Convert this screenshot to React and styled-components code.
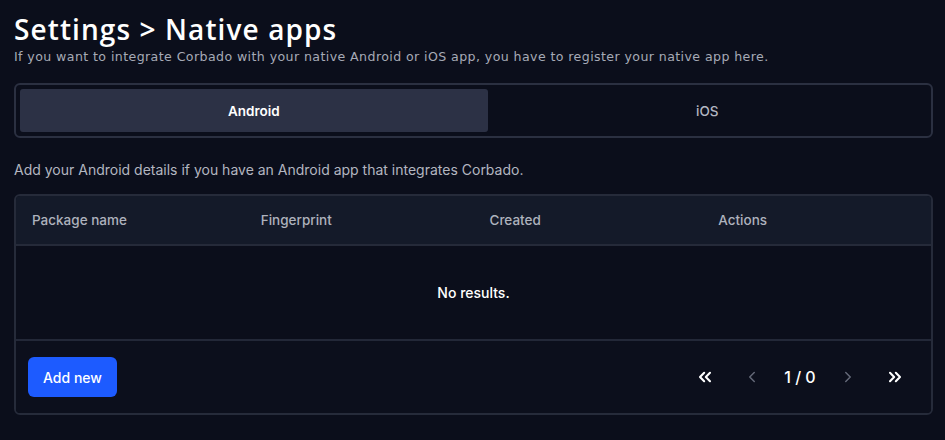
import React, { useState } from 'react';
import styled, { createGlobalStyle } from 'styled-components';
import { ChevronLeft, ChevronRight, ChevronsLeft, ChevronsRight } from 'lucide-react';

const GlobalStyle = createGlobalStyle`
  html, body {
    margin: 0;
    background: #0b0e1b;
  }
  body {
    font-family: Inter, "Liberation Sans", sans-serif;
    color: #fff;
  }
`;

const App = () => {
  const [tab, setTab] = useState('android');

  return (
    <>
      <GlobalStyle />
      <Page>
        <Title>Settings &gt; Native apps</Title>
        <Subtitle>
          If you want to integrate Corbado with your native Android or iOS app, you have to register your native app here.
        </Subtitle>

        <Tabs>
          <Tab $active={tab === 'android'} onClick={() => setTab('android')}>Android</Tab>
          <Tab $active={tab === 'ios'} onClick={() => setTab('ios')}>iOS</Tab>
        </Tabs>

        <Hint>Add your Android details if you have an Android app that integrates Corbado.</Hint>

        <Table>
          <HeadRow>
            <HeadCell>Package name</HeadCell>
            <HeadCell>Fingerprint</HeadCell>
            <HeadCell>Created</HeadCell>
            <HeadCell>Actions</HeadCell>
          </HeadRow>
          <Empty>No results.</Empty>
          <Footer>
            <AddButton>Add new</AddButton>
            <Pager>
              <PageButton><ChevronsLeft size={20} strokeWidth={2.5} /></PageButton>
              <PageButton $muted><ChevronLeft size={18} strokeWidth={2} /></PageButton>
              <PageCount>1 / 0</PageCount>
              <PageButton $muted><ChevronRight size={18} strokeWidth={2} /></PageButton>
              <PageButton><ChevronsRight size={20} strokeWidth={2.5} /></PageButton>
            </Pager>
          </Footer>
        </Table>
      </Page>
    </>
  );
};

const Page = styled.div`
  padding: 11px 12px 0 14px;
  display: flex;
  flex-direction: column;
`;

const Title = styled.h1`
  margin: 0;
  font-family: "Open Sans", "DejaVu Sans", sans-serif;
  font-size: 28px;
  font-weight: 600;
  letter-spacing: 1.1px;
  line-height: 36px;
  color: #fff;
`;

const Subtitle = styled.p`
  margin: 1px 0 0;
  font-family: "DejaVu Sans", sans-serif;
  font-size: 12.6px;
  font-weight: 400;
  letter-spacing: 0.4px;
  color: #a6aab6;
  line-height: 18px;
`;

const Tabs = styled.div`
  margin-top: 17px;
  display: grid;
  grid-template-columns: 467fr 439fr;
  padding: 4px;
  border: 2px solid #2b3041;
  border-radius: 6px;
  height: 43px;
`;

const Tab = styled.button`
  border: none;
  border-radius: 3px;
  background: ${({ $active }) => ($active ? '#2c3145' : 'transparent')};
  color: ${({ $active }) => ($active ? '#fff' : '#b4b7c2')};
  font-family: Inter, sans-serif;
  font-size: 13.5px;
  font-weight: ${({ $active }) => ($active ? 600 : 500)};
  cursor: pointer;
`;

const Hint = styled.p`
  margin: 23px 0 0;
  font-size: 14px;
  color: #b3b6c0;
  line-height: 18px;
`;

const Table = styled.div`
  margin-top: 15px;
  border: 2px solid #262b3a;
  border-radius: 6px;
  overflow: hidden;
`;

const HeadRow = styled.div`
  display: grid;
  grid-template-columns: repeat(4, 1fr);
  height: 48px;
  align-items: center;
  background: #141a29;
  border-bottom: 2px solid #252a39;
`;

const HeadCell = styled.div`
  padding-left: 16px;
  font-size: 13.5px;
  font-weight: 500;
  color: #aeb2bd;
`;

const Empty = styled.div`
  height: 93px;
  display: flex;
  align-items: center;
  justify-content: center;
  font-size: 14px;
  font-weight: 500;
  color: #fff;
  border-bottom: 2px solid #232838;
`;

const Footer = styled.div`
  display: flex;
  align-items: center;
  justify-content: space-between;
  height: 72px;
  padding: 0 21px 0 12px;
  background: #0c0f1c;
`;

const AddButton = styled.button`
  background: #1d5bff;
  color: #fff;
  border: none;
  border-radius: 6px;
  width: 89px;
  height: 40px;
  font-family: Inter, sans-serif;
  font-size: 14px;
  font-weight: 500;
  cursor: pointer;
`;

const Pager = styled.div`
  display: flex;
  align-items: center;
  gap: 17px;
`;

const PageButton = styled.button`
  background: none;
  border: none;
  padding: 0;
  width: 30px;
  height: 30px;
  display: flex;
  align-items: center;
  justify-content: center;
  color: ${({ $muted }) => ($muted ? '#636877' : '#fff')};
  cursor: pointer;
`;

const PageCount = styled.span`
  font-size: 16px;
  font-weight: 500;
  color: #fff;
  min-width: 32px;
  text-align: center;
`;

export default App;
